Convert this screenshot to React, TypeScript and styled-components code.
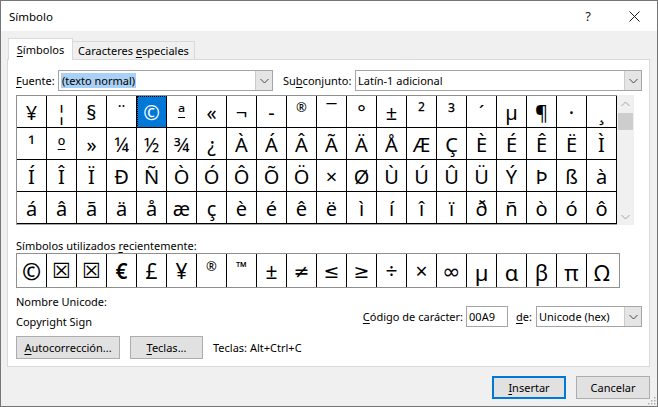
import React from 'react'
import styled, { createGlobalStyle } from 'styled-components'

const UI_FONT = `"Segoe UI", "Noto Sans", "Open Sans", sans-serif`

const GlobalStyle = createGlobalStyle`
  html, body {
    margin: 0;
    padding: 0;
    background: #ffffff;
  }
  body {
    font-family: ${UI_FONT};
    font-size: 11px;
    color: #000;
  }
`

const Window = styled.div`
  position: relative;
  width: 658px;
  height: 407px;
  box-sizing: border-box;
  border: 1px solid #767676;
  display: flex;
  flex-direction: column;
  background: #f0f0f0;
  overflow: hidden;
`

const TitleBar = styled.div`
  height: 30px;
  flex-shrink: 0;
  background: #ffffff;
  display: flex;
  align-items: center;
  padding-left: 8px;
`

const Title = styled.span`
  flex: 1;
  font-size: 11.5px;
`

const TitleButton = styled.div`
  width: 46px;
  height: 30px;
  display: flex;
  align-items: center;
  justify-content: center;
  font-size: 13px;
  color: #1a1a1a;
`

const Body = styled.div`
  flex: 1;
  display: flex;
  flex-direction: column;
  padding: 7px 7px 0 6px;
`

const Tabs = styled.div`
  display: flex;
  align-items: flex-end;
  height: 21px;
  padding-left: 1px;
`

const Tab = styled.div<{ $active?: boolean }>`
  box-sizing: border-box;
  display: flex;
  align-items: center;
  justify-content: center;
  border: 1px solid #d9d9d9;
  border-bottom: none;
  ${(p) =>
    p.$active
      ? `
    width: 65px;
    height: 22px;
    margin-bottom: -1px;
    background: #ffffff;
    position: relative;
    z-index: 1;
    padding-bottom: 1px;
  `
      : `
    width: 122px;
    height: 18px;
    border-left: none;
    background: #f0f0f0;
  `}
`

const Key = styled.span`
  text-decoration: underline;
  text-underline-offset: 2px;
`

const Panel = styled.div`
  box-sizing: border-box;
  height: 308px;
  border: 1px solid #d9d9d9;
  background: #ffffff;
  padding: 10px 7px 0 8px;
  display: flex;
  flex-direction: column;
`

const FontRow = styled.div`
  display: flex;
  align-items: center;
  height: 21px;
`

const Label = styled.span<{ $w?: number; $ml?: number }>`
  display: inline-block;
  white-space: nowrap;
  margin-left: ${(p) => p.$ml ?? 0}px;
  ${(p) => (p.$w ? `width: ${p.$w}px;` : '')}
`

const Combo = styled.div<{ $w: number; $ml?: number }>`
  box-sizing: border-box;
  width: ${(p) => p.$w}px;
  height: 21px;
  margin-left: ${(p) => p.$ml ?? 0}px;
  border: 1px solid #a5a5a5;
  background: #ffffff;
  display: flex;
  align-items: stretch;
`

const ComboText = styled.div`
  flex: 1;
  display: flex;
  align-items: center;
  padding-left: 2px;
  white-space: nowrap;
  overflow: hidden;
`

const Selected = styled.span`
  background: #a9d1f5;
  padding: 0 1px;
  line-height: 15px;
`

const ComboButton = styled.div`
  width: 16px;
  background: #e5e5e5;
  border-left: 1px solid #cccccc;
  display: flex;
  align-items: center;
  justify-content: center;
`

const CharArea = styled.div`
  display: flex;
  margin-top: 4px;
`

const Grid = styled.div`
  display: grid;
  grid-template-columns: repeat(20, 30px);
  grid-auto-rows: 32px;
  border-top: 1px solid #8f8f8f;
  border-left: 1px solid #8f8f8f;
  border-bottom: 1px solid #a8a8a8;
`

const Cell = styled.div<{ $selected?: boolean; $small?: boolean; $under?: boolean }>`
  box-sizing: border-box;
  border-right: 1px solid #000;
  border-bottom: 1px solid #000;
  display: flex;
  justify-content: center;
  align-items: ${(p) => (p.$small ? 'flex-start' : 'center')};
  padding-top: ${(p) => (p.$small ? '5px' : '3px')};
  font-family: "Noto Sans", "DejaVu Sans", sans-serif;
  font-size: ${(p) => (p.$small ? '13px' : '20px')};
  line-height: 1;
  text-decoration: ${(p) => (p.$under ? 'underline' : 'none')};
  text-decoration-thickness: 1px;
  text-underline-offset: -3px;
  color: ${(p) => (p.$selected ? '#ffffff' : '#000000')};
  background: ${(p) => (p.$selected ? '#0078d7' : 'transparent')};
  outline: ${(p) => (p.$selected ? '1px dotted #000' : 'none')};
  outline-offset: -1px;
`

const Scrollbar = styled.div`
  width: 17px;
  height: 130px;
  background: #f0f0f0;
  display: flex;
  flex-direction: column;
  align-items: center;
`

const ScrollArrow = styled.div`
  height: 17px;
  width: 17px;
  display: flex;
  align-items: center;
  justify-content: center;
`

const ScrollThumb = styled.div`
  width: 15px;
  height: 17px;
  margin-top: 1px;
  background: #cdcdcd;
`

const ScrollSpace = styled.div`
  flex: 1;
`

const RecentLabel = styled.div`
  margin-top: 13px;
  line-height: 15px;
`

const RecentRow = styled.div`
  display: grid;
  grid-template-columns: repeat(20, 30px);
  height: 35px;
  width: 604px;
  box-sizing: border-box;
  border: 1px solid #8f8f8f;
`

const RecentCell = styled.div<{ $font?: string; $size?: number; $weight?: number; $top?: boolean; $last?: boolean }>`
  border-right: ${(p) => (p.$last ? 'none' : '1px solid #000')};
  display: flex;
  justify-content: center;
  align-items: ${(p) => (p.$top ? 'flex-start' : 'center')};
  padding-top: ${(p) => (p.$top ? '6px' : '2px')};
  box-sizing: border-box;
  font-family: ${(p) => p.$font ?? '"Noto Sans", "DejaVu Sans", sans-serif'};
  font-size: ${(p) => p.$size ?? 21}px;
  font-weight: ${(p) => p.$weight ?? 400};
  line-height: 1;
`

const InfoRow = styled.div`
  display: flex;
  margin-top: 4px;
`

const InfoColumn = styled.div`
  flex: 1;
  line-height: 20px;
`

const CodeRow = styled.div`
  display: flex;
  align-items: center;
  padding-top: 14px;
  height: 21px;
`

const CodeInput = styled.div`
  box-sizing: border-box;
  width: 42px;
  height: 21px;
  margin-left: 3px;
  border: 1px solid #a5a5a5;
  display: flex;
  align-items: center;
  padding-left: 2px;
`

const ButtonsRow = styled.div`
  display: flex;
  align-items: center;
  margin-top: 4px;
`

const Button = styled.div<{ $w: number; $primary?: boolean; $ml?: number }>`
  box-sizing: border-box;
  width: ${(p) => p.$w}px;
  height: 23px;
  margin-left: ${(p) => p.$ml ?? 0}px;
  background: #e1e1e1;
  border: ${(p) => (p.$primary ? '2px solid #0078d7' : '1px solid #adadad')};
  display: flex;
  align-items: center;
  justify-content: center;
  white-space: nowrap;
`

const Shortcut = styled.span`
  margin-left: 10px;
`

const Footer = styled.div`
  display: flex;
  justify-content: flex-end;
  gap: 10px;
  margin-top: 9px;
`

const Grip = styled.svg`
  position: absolute;
  right: 1px;
  bottom: 1px;
`

const Chevron = ({ up, color = '#444' }: { up?: boolean; color?: string }) => (
  <svg width="9" height="6" viewBox="0 0 9 6">
    <path
      d={up ? 'M0.5 5 L4.5 1 L8.5 5' : 'M0.5 1 L4.5 5 L8.5 1'}
      fill="none"
      stroke={color}
      strokeWidth="1"
    />
  </svg>
)

const rows: string[][] = [
  ['¥', '¦', '§', '¨', '©', 'ª', '«', '¬', '-', '®', '¯', '°', '±', '²', '³', '´', 'µ', '¶', '·', '¸'],
  ['¹', 'º', '»', '¼', '½', '¾', '¿', 'À', 'Á', 'Â', 'Ã', 'Ä', 'Å', 'Æ', 'Ç', 'È', 'É', 'Ê', 'Ë', 'Ì'],
  ['Í', 'Î', 'Ï', 'Ð', 'Ñ', 'Ò', 'Ó', 'Ô', 'Õ', 'Ö', '×', 'Ø', 'Ù', 'Ú', 'Û', 'Ü', 'Ý', 'Þ', 'ß', 'à'],
  ['á', 'â', 'ã', 'ä', 'å', 'æ', 'ç', 'è', 'é', 'ê', 'ë', 'ì', 'í', 'î', 'ï', 'ð', 'ñ', 'ò', 'ó', 'ô'],
]

const smallChars = ['®']
const underlined = ['ª', 'º']

type Recent = { ch: string; font?: string; size?: number; weight?: number; top?: boolean }

const recent: Recent[] = [
  { ch: '©', size: 23, weight: 600 },
  { ch: '☒', font: '"DejaVu Sans", sans-serif', size: 21 },
  { ch: '☒', font: '"DejaVu Sans", sans-serif', size: 21, weight: 700 },
  { ch: '€', weight: 600 },
  { ch: '£' },
  { ch: '¥' },
  { ch: '®', size: 13, top: true },
  { ch: '™', size: 14, weight: 700, top: true },
  { ch: '±' },
  { ch: '≠', font: '"DejaVu Sans", sans-serif', size: 19 },
  { ch: '≤', font: '"DejaVu Sans", sans-serif', size: 19 },
  { ch: '≥', font: '"DejaVu Sans", sans-serif', size: 19 },
  { ch: '÷' },
  { ch: '×' },
  { ch: '∞', font: '"DejaVu Sans", sans-serif', size: 22 },
  { ch: 'µ', size: 22 },
  { ch: 'α', size: 22 },
  { ch: 'β', size: 22 },
  { ch: 'π', size: 22 },
  { ch: 'Ω', size: 22 },
]

export default function App() {
  return (
    <>
      <GlobalStyle />
      <Window>
        <TitleBar>
          <Title>Símbolo</Title>
          <TitleButton>?</TitleButton>
          <TitleButton>
            <svg width="11" height="11" viewBox="0 0 11 11">
              <path d="M0.5 0.5 L10.5 10.5 M10.5 0.5 L0.5 10.5" stroke="#1a1a1a" strokeWidth="1" />
            </svg>
          </TitleButton>
        </TitleBar>
        <Body>
          <Tabs>
            <Tab $active>
              <span>
                <Key>S</Key>ímbolos
              </span>
            </Tab>
            <Tab>
              <span>
                Caracteres <Key>e</Key>speciales
              </span>
            </Tab>
          </Tabs>
          <Panel>
            <FontRow>
              <Label $w={42}>
                <Key>F</Key>uente:
              </Label>
              <Combo $w={215}>
                <ComboText>
                  <Selected>(texto normal)</Selected>
                </ComboText>
                <ComboButton>
                  <Chevron />
                </ComboButton>
              </Combo>
              <Label $w={72} $ml={10}>
                Su<Key>b</Key>conjunto:
              </Label>
              <Combo $w={287}>
                <ComboText>Latín-1 adicional</ComboText>
                <ComboButton>
                  <Chevron />
                </ComboButton>
              </Combo>
            </FontRow>
            <CharArea>
              <Grid>
                {rows.map((r, ri) =>
                  r.map((c, ci) => (
                    <Cell
                      key={`${ri}-${ci}`}
                      $selected={ri === 0 && ci === 4}
                      $small={smallChars.includes(c)}
                      $under={underlined.includes(c)}
                    >
                      {c}
                    </Cell>
                  )),
                )}
              </Grid>
              <Scrollbar>
                <ScrollArrow>
                  <Chevron up color="#a3a3a3" />
                </ScrollArrow>
                <ScrollThumb />
                <ScrollSpace />
                <ScrollArrow>
                  <Chevron color="#a3a3a3" />
                </ScrollArrow>
              </Scrollbar>
            </CharArea>
            <RecentLabel>
              Símbolos utilizados <Key>r</Key>ecientemente:
            </RecentLabel>
            <RecentRow>
              {recent.map((r, i) => (
                <RecentCell
                  key={i}
                  $font={r.font}
                  $size={r.size}
                  $weight={r.weight}
                  $top={r.top}
                  $last={i === recent.length - 1}
                >
                  {r.ch}
                </RecentCell>
              ))}
            </RecentRow>
            <InfoRow>
              <InfoColumn>
                <div>Nombre Unicode:</div>
                <div>Copyright Sign</div>
              </InfoColumn>
              <CodeRow>
                <Label>
                  <Key>C</Key>ódigo de carácter:
                </Label>
                <CodeInput>00A9</CodeInput>
                <Label $ml={8}>
                  <Key>d</Key>e:
                </Label>
                <Combo $w={106} $ml={4}>
                  <ComboText>Unicode (hex)</ComboText>
                  <ComboButton>
                    <Chevron />
                  </ComboButton>
                </Combo>
              </CodeRow>
            </InfoRow>
            <ButtonsRow>
              <Button $w={104}>
                <span>
                  <Key>A</Key>utocorrección...
                </span>
              </Button>
              <Button $w={73} $ml={10}>
                <span>
                  <Key>T</Key>eclas...
                </span>
              </Button>
              <Shortcut>Teclas: Alt+Ctrl+C</Shortcut>
            </ButtonsRow>
          </Panel>
          <Footer>
            <Button $w={74} $primary>
              <span>
                <Key>I</Key>nsertar
              </span>
            </Button>
            <Button $w={74}>Cancelar</Button>
          </Footer>
        </Body>
        <Grip width="10" height="10" viewBox="0 0 10 10">
          {[
            [8, 2],
            [8, 5],
            [5, 5],
            [8, 8],
            [5, 8],
            [2, 8],
          ].map(([x, y], i) => (
            <rect key={i} x={x} y={y} width="1.5" height="1.5" fill="#b0b0b0" />
          ))}
        </Grip>
      </Window>
    </>
  )
}
